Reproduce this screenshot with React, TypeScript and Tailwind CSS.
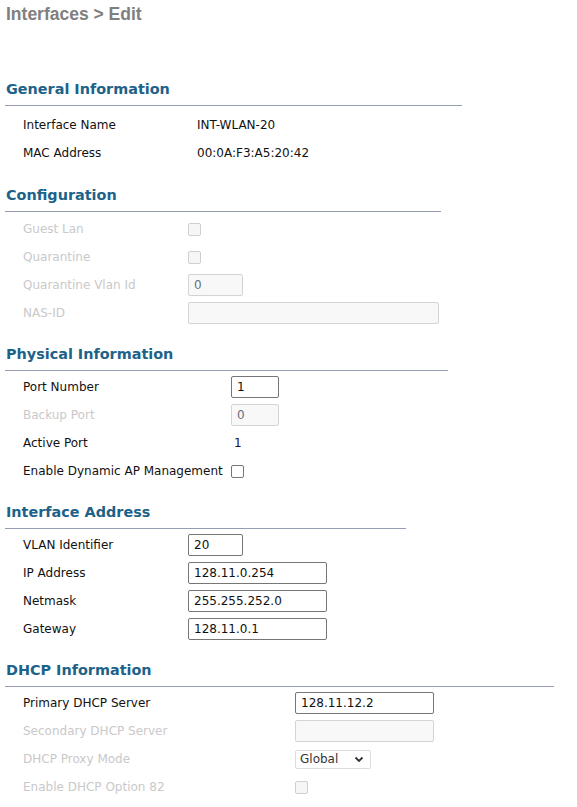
import React from 'react';

const font = { fontFamily: '"DejaVu Sans", Verdana, sans-serif' };

function Heading({ title, width }: { title: string; width: string }) {
  return (
    <div className={`ml-[5px] border-b border-[#959db3] pb-[6px] ${width}`}>
      <h2 className="pl-[1px] text-[14.4px] font-bold leading-[20px] text-[#1d6289]">{title}</h2>
    </div>
  );
}

function Row({
  label,
  labelWidth,
  disabled,
  children,
}: {
  label: string;
  labelWidth: string;
  disabled?: boolean;
  children?: React.ReactNode;
}) {
  return (
    <div className="flex h-[28px] items-center pl-[23px]">
      <div className={`${labelWidth} shrink-0 text-[12px] ${disabled ? 'text-[#c9c9c9]' : 'text-[#111]'}`}>
        {label}
      </div>
      <div className="flex items-center">{children}</div>
    </div>
  );
}

function TextInput({ value, width, disabled }: { value: string; width: string; disabled?: boolean }) {
  return (
    <input
      readOnly
      value={value}
      disabled={disabled}
      className={`h-[22px] ${width} rounded-[2px] border px-[5px] text-[12px] outline-none ${
        disabled ? 'border-[#d4d4d4] bg-[#f8f8f8] text-[#66707f]' : 'border-[#767676] bg-white text-[#111]'
      }`}
      style={font}
    />
  );
}

function Checkbox({ disabled }: { disabled?: boolean }) {
  return (
    <span
      className={`inline-block h-[13px] w-[13px] rounded-[2px] border ${
        disabled ? 'border-[#cfcfcf] bg-[#f6f6f6]' : 'border-[#767676] bg-white'
      }`}
    />
  );
}

export default function App() {
  return (
    <div className="min-h-screen bg-white pb-4" style={font}>
      <h1
        className="pl-[6px] pt-[4px] text-[17.5px] font-bold leading-[20px] text-[#808080]"
        style={{ fontFamily: '"Liberation Sans", Arial, sans-serif' }}
      >
        Interfaces &gt; Edit
      </h1>

      <section className="mt-[55px]">
        <Heading title="General Information" width="w-[457px]" />
        <div className="mt-[5px]">
          <Row label="Interface Name" labelWidth="w-[174px]">
            <span className="text-[12px] text-[#111]">INT-WLAN-20</span>
          </Row>
          <Row label="MAC Address" labelWidth="w-[174px]">
            <span className="text-[12px] text-[#111]">00:0A:F3:A5:20:42</span>
          </Row>
        </div>
      </section>

      <section className="mt-[18px]">
        <Heading title="Configuration" width="w-[436px]" />
        <div className="mt-[3px]">
          <Row label="Guest Lan" labelWidth="w-[165px]" disabled>
            <Checkbox disabled />
          </Row>
          <Row label="Quarantine" labelWidth="w-[165px]" disabled>
            <Checkbox disabled />
          </Row>
          <Row label="Quarantine Vlan Id" labelWidth="w-[165px]" disabled>
            <TextInput value="0" width="w-[55px]" disabled />
          </Row>
          <Row label="NAS-ID" labelWidth="w-[165px]" disabled>
            <TextInput value="" width="w-[251px]" disabled />
          </Row>
        </div>
      </section>

      <section className="mt-[17px]">
        <Heading title="Physical Information" width="w-[443px]" />
        <div className="mt-[2px]">
          <Row label="Port Number" labelWidth="w-[208px]">
            <TextInput value="1" width="w-[48px]" />
          </Row>
          <Row label="Backup Port" labelWidth="w-[208px]" disabled>
            <TextInput value="0" width="w-[48px]" disabled />
          </Row>
          <Row label="Active Port" labelWidth="w-[211px]">
            <span className="text-[12px] text-[#2a0a3a]">1</span>
          </Row>
          <Row label="Enable Dynamic AP Management" labelWidth="w-[208px]">
            <Checkbox />
          </Row>
        </div>
      </section>

      <section className="mt-[17px]">
        <Heading title="Interface Address" width="w-[401px]" />
        <div className="mt-[2px]">
          <Row label="VLAN Identifier" labelWidth="w-[165px]">
            <TextInput value="20" width="w-[55px]" />
          </Row>
          <Row label="IP Address" labelWidth="w-[165px]">
            <TextInput value="128.11.0.254" width="w-[139px]" />
          </Row>
          <Row label="Netmask" labelWidth="w-[165px]">
            <TextInput value="255.255.252.0" width="w-[139px]" />
          </Row>
          <Row label="Gateway" labelWidth="w-[165px]">
            <TextInput value="128.11.0.1" width="w-[139px]" />
          </Row>
        </div>
      </section>

      <section className="mt-[17px]">
        <Heading title="DHCP Information" width="w-[549px]" />
        <div className="mt-[2px]">
          <Row label="Primary DHCP Server" labelWidth="w-[272px]">
            <TextInput value="128.11.12.2" width="w-[139px]" />
          </Row>
          <Row label="Secondary DHCP Server" labelWidth="w-[272px]" disabled>
            <TextInput value="" width="w-[139px]" disabled />
          </Row>
          <Row label="DHCP Proxy Mode" labelWidth="w-[272px]" disabled>
            <div className="flex h-[19px] w-[76px] items-center justify-between rounded-[2px] border border-[#dcdcdc] bg-white pl-[4px] pr-[6px] text-[12px] text-[#333]">
              <span>Global</span>
              <svg width="10" height="7" viewBox="0 0 10 7" fill="none">
                <path d="M1.5 1.5 L5 5 L8.5 1.5" stroke="#333" strokeWidth="1.8" />
              </svg>
            </div>
          </Row>
          <Row label="Enable DHCP Option 82" labelWidth="w-[272px]" disabled>
            <Checkbox disabled />
          </Row>
        </div>
      </section>
    </div>
  );
}
